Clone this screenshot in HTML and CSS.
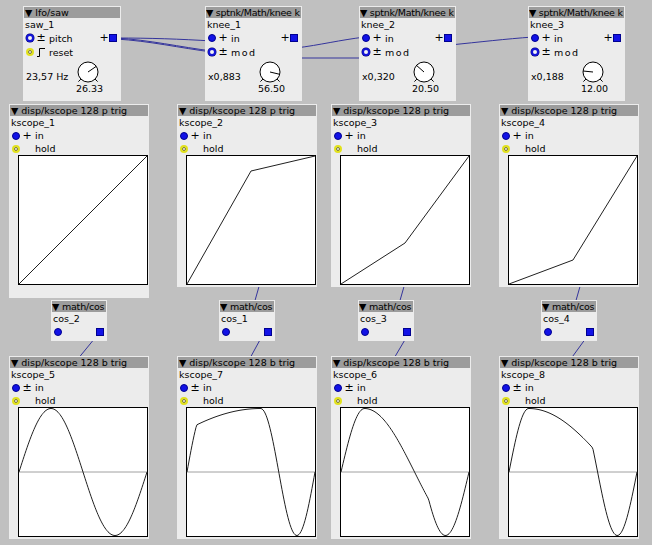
FILE: index.html
```html
<!DOCTYPE html>
<html>
<head>
<meta charset="utf-8">
<link rel="stylesheet" href="styles.css">
</head>
<body>
<div class="patch">
  <svg class="wires" width="652" height="545" viewBox="0 0 652 545">
    <g fill="none" stroke="#34349c" stroke-width="1">
      <path d="M116 38 C150 38 180 39 212 41"/>
      <path d="M116 38 C150 40 180 47 212 51"/>
      <path d="M116 39 C150 41 180 48 212 52"/>
      <path d="M296 48 C320 45 340 40 365 37"/>
      <path d="M296 58 L365 58"/>
      <path d="M450 45 C480 42 505 39 533 37"/>
      <path d="M260 283 L254 304"/>
      <path d="M261 338 L249 360"/>
      <path d="M95 338 L77 360"/>
      <path d="M405 283 L399 304"/>
      <path d="M406 338 L393 360"/>
      <path d="M581 283 L575 304"/>
      <path d="M586 338 L570 360"/>
    </g>
  </svg>

  <!-- lfo/saw -->
  <div class="obj small o-lfo">
    <div class="hdr">▼ lfo/saw</div>
    <div class="name">saw_1</div>
    <div class="row">
      <span class="inlet ring"></span><span class="sign">±</span><span class="lbl">pitch</span>
      <span class="out"><span class="sign">+</span><span class="outlet"></span></span>
    </div>
    <div class="row">
      <span class="inlet bool"></span><span class="sign"><svg class="step" width="8" height="10" viewBox="0 0 8 10"><path d="M0 9.5 H2.5 V1.5 H8" fill="none" stroke="#000" stroke-width="1"/></svg></span><span class="lbl">reset</span>
    </div>
    <div class="param">
      <span class="pval">23,57 Hz</span>
      <span class="knob">
        <svg width="24" height="23" viewBox="0 0 24 23"><circle cx="12" cy="11" r="10" fill="#fff" stroke="#000"/><path d="M12 11 L20.25 5.35 M4.9 18.1 L2.4 20.6 M19.1 18.1 L21.6 20.6" stroke="#000" fill="none"/></svg>
        <span class="kval">26.33</span>
      </span>
    </div>
  </div>

  <!-- knee_1 -->
  <div class="obj small o-k1">
    <div class="hdr knee">▼ sptnk/Math/knee k</div>
    <div class="name">knee_1</div>
    <div class="row">
      <span class="inlet fill"></span><span class="sign">+</span><span class="lbl">in</span>
      <span class="out"><span class="sign">+</span><span class="outlet"></span></span>
    </div>
    <div class="row">
      <span class="inlet ring"></span><span class="sign">±</span><span class="lbl wide">mod</span>
    </div>
    <div class="param">
      <span class="pval">x0,883</span>
      <span class="knob">
        <svg width="24" height="23" viewBox="0 0 24 23"><circle cx="12" cy="11" r="10" fill="#fff" stroke="#000"/><path d="M12 11 L21.7 13.3 M4.9 18.1 L2.4 20.6 M19.1 18.1 L21.6 20.6" stroke="#000" fill="none"/></svg>
        <span class="kval">56.50</span>
      </span>
    </div>
  </div>

  <!-- knee_2 -->
  <div class="obj small o-k2">
    <div class="hdr knee">▼ sptnk/Math/knee k</div>
    <div class="name">knee_2</div>
    <div class="row">
      <span class="inlet fill"></span><span class="sign">+</span><span class="lbl">in</span>
      <span class="out"><span class="sign">+</span><span class="outlet"></span></span>
    </div>
    <div class="row">
      <span class="inlet ring"></span><span class="sign">±</span><span class="lbl wide">mod</span>
    </div>
    <div class="param">
      <span class="pval">x0,320</span>
      <span class="knob">
        <svg width="24" height="23" viewBox="0 0 24 23"><circle cx="12" cy="11" r="10" fill="#fff" stroke="#000"/><path d="M12 11 L4.5 4.4 M4.9 18.1 L2.4 20.6 M19.1 18.1 L21.6 20.6" stroke="#000" fill="none"/></svg>
        <span class="kval">20.50</span>
      </span>
    </div>
  </div>

  <!-- knee_3 -->
  <div class="obj small o-k3">
    <div class="hdr knee">▼ sptnk/Math/knee k</div>
    <div class="name">knee_3</div>
    <div class="row">
      <span class="inlet fill"></span><span class="sign">+</span><span class="lbl">in</span>
      <span class="out"><span class="sign">+</span><span class="outlet"></span></span>
    </div>
    <div class="row">
      <span class="inlet ring"></span><span class="sign">±</span><span class="lbl wide">mod</span>
    </div>
    <div class="param">
      <span class="pval">x0,188</span>
      <span class="knob">
        <svg width="24" height="23" viewBox="0 0 24 23"><circle cx="12" cy="11" r="10" fill="#fff" stroke="#000"/><path d="M12 11 L2.1 10 M4.9 18.1 L2.4 20.6 M19.1 18.1 L21.6 20.6" stroke="#000" fill="none"/></svg>
        <span class="kval">12.00</span>
      </span>
    </div>
  </div>

  <!-- upper scopes -->
  <div class="obj scope o-s1 tall">
    <div class="hdr">▼ disp/kscope 128 p trig</div>
    <div class="name">kscope_1</div>
    <div class="srow"><span class="inlet fill"></span><span class="sign">+</span><span class="lbl">in</span></div>
    <div class="srow"><span class="inlet bool"></span><span class="sign"></span><span class="lbl">hold</span></div>
    <div class="plot">
      <svg width="128" height="128" viewBox="0 0 128 128"><polyline class="trace" points="0,128 128,0"/></svg>
    </div>
  </div>

  <div class="obj scope o-s2">
    <div class="hdr">▼ disp/kscope 128 p trig</div>
    <div class="name">kscope_2</div>
    <div class="srow"><span class="inlet fill"></span><span class="sign">+</span><span class="lbl">in</span></div>
    <div class="srow"><span class="inlet bool"></span><span class="sign"></span><span class="lbl">hold</span></div>
    <div class="plot">
      <svg width="128" height="128" viewBox="0 0 128 128"><polyline class="trace" points="0,128 64,15 128,0"/></svg>
    </div>
  </div>

  <div class="obj scope o-s3">
    <div class="hdr">▼ disp/kscope 128 p trig</div>
    <div class="name">kscope_3</div>
    <div class="srow"><span class="inlet fill"></span><span class="sign">+</span><span class="lbl">in</span></div>
    <div class="srow"><span class="inlet bool"></span><span class="sign"></span><span class="lbl">hold</span></div>
    <div class="plot">
      <svg width="128" height="128" viewBox="0 0 128 128"><polyline class="trace" points="0,128 64,87 128,0"/></svg>
    </div>
  </div>

  <div class="obj scope o-s4">
    <div class="hdr">▼ disp/kscope 128 p trig</div>
    <div class="name">kscope_4</div>
    <div class="srow"><span class="inlet fill"></span><span class="sign">+</span><span class="lbl">in</span></div>
    <div class="srow"><span class="inlet bool"></span><span class="sign"></span><span class="lbl">hold</span></div>
    <div class="plot">
      <svg width="128" height="128" viewBox="0 0 128 128"><polyline class="trace" points="0,128 64,104 128,0"/></svg>
    </div>
  </div>

  <!-- cos -->
  <div class="obj cos o-c2">
    <div class="hdr">▼ math/cos</div>
    <div class="name">cos_2</div>
    <div class="crow"><span class="inlet fill"></span><span class="outlet"></span></div>
  </div>
  <div class="obj cos o-c1">
    <div class="hdr">▼ math/cos</div>
    <div class="name">cos_1</div>
    <div class="crow"><span class="inlet fill"></span><span class="outlet"></span></div>
  </div>
  <div class="obj cos o-c3">
    <div class="hdr">▼ math/cos</div>
    <div class="name">cos_3</div>
    <div class="crow"><span class="inlet fill"></span><span class="outlet"></span></div>
  </div>
  <div class="obj cos o-c4">
    <div class="hdr">▼ math/cos</div>
    <div class="name">cos_4</div>
    <div class="crow"><span class="inlet fill"></span><span class="outlet"></span></div>
  </div>

  <!-- lower scopes -->
  <div class="obj scope o-s5">
    <div class="hdr">▼ disp/kscope 128 b trig</div>
    <div class="name">kscope_5</div>
    <div class="srow"><span class="inlet fill"></span><span class="sign">±</span><span class="lbl">in</span></div>
    <div class="srow"><span class="inlet bool"></span><span class="sign"></span><span class="lbl">hold</span></div>
    <div class="plot">
      <svg width="128" height="128" viewBox="0 0 128 128"><line class="mid" x1="0" y1="64" x2="128" y2="64"/><polyline class="trace wave" data-f="0.5" points=""/></svg>
    </div>
  </div>
  <div class="obj scope o-s7">
    <div class="hdr">▼ disp/kscope 128 b trig</div>
    <div class="name">kscope_7</div>
    <div class="srow"><span class="inlet fill"></span><span class="sign">±</span><span class="lbl">in</span></div>
    <div class="srow"><span class="inlet bool"></span><span class="sign"></span><span class="lbl">hold</span></div>
    <div class="plot">
      <svg width="128" height="128" viewBox="0 0 128 128"><line class="mid" x1="0" y1="64" x2="128" y2="64"/><polyline class="trace wave" data-f="0.883" points=""/></svg>
    </div>
  </div>
  <div class="obj scope o-s6">
    <div class="hdr">▼ disp/kscope 128 b trig</div>
    <div class="name">kscope_6</div>
    <div class="srow"><span class="inlet fill"></span><span class="sign">±</span><span class="lbl">in</span></div>
    <div class="srow"><span class="inlet bool"></span><span class="sign"></span><span class="lbl">hold</span></div>
    <div class="plot">
      <svg width="128" height="128" viewBox="0 0 128 128"><line class="mid" x1="0" y1="64" x2="128" y2="64"/><polyline class="trace wave" data-f="0.320" points=""/></svg>
    </div>
  </div>
  <div class="obj scope o-s8">
    <div class="hdr">▼ disp/kscope 128 b trig</div>
    <div class="name">kscope_8</div>
    <div class="srow"><span class="inlet fill"></span><span class="sign">±</span><span class="lbl">in</span></div>
    <div class="srow"><span class="inlet bool"></span><span class="sign"></span><span class="lbl">hold</span></div>
    <div class="plot">
      <svg width="128" height="128" viewBox="0 0 128 128"><line class="mid" x1="0" y1="64" x2="128" y2="64"/><polyline class="trace wave" data-f="0.188" points=""/></svg>
    </div>
  </div>
</div>
<script src="script.js"></script>
</body>
</html>
```

FILE: styles.css
```css
* { box-sizing: border-box; }
body {
  margin: 0;
  background: #c0c0c0;
  font-family: "DejaVu Sans", sans-serif;
  font-size: 9.5px;
  color: #000;
}
.patch {
  position: relative;
  width: 652px;
  height: 545px;
  overflow: hidden;
  background: #c0c0c0;
}
.wires { position: absolute; left: 0; top: 0; }

.obj {
  position: absolute;
  background: #ececec;
  padding: 1px;
  display: flex;
  flex-direction: column;
}
.hdr {
  height: 11px;
  line-height: 11px;
  background: #9c9c9c;
  padding-left: 1px;
  white-space: nowrap;
  overflow: hidden;
  flex: none;
}
.hdr.knee { letter-spacing: -0.25px; padding-left: 0; }
.name {
  height: 13px;
  line-height: 13px;
  padding-left: 1px;
  white-space: nowrap;
  flex: none;
}
.row {
  display: flex;
  align-items: center;
  height: 14px;
  padding-left: 2px;
  flex: none;
}
.srow {
  display: flex;
  align-items: center;
  height: 13px;
  padding-left: 2px;
  flex: none;
}
.sign {
  width: 14px;
  text-align: center;
  font-size: 11px;
  line-height: 10px;
  display: flex;
  justify-content: center;
}
.lbl { padding-left: 1px; white-space: nowrap; }
.lbl.wide { letter-spacing: 1.5px; }
.out { margin-left: auto; display: flex; align-items: center; padding-right: 3px; }
.out .sign { width: 10px; }

.inlet {
  width: 8px;
  height: 8px;
  border-radius: 50%;
  flex: none;
}
.inlet.fill { background: #1212e6; border: 1px solid #000090; }
.inlet.ring { background: #f4f4f4; border: 2px solid #1414d8; box-shadow: 0 0 0 0.5px #000070; }
.inlet.bool { background: #ececec; border: 2px solid #e2e21c; box-shadow: inset 0 0 0 1px #6a6a20; }
.outlet {
  width: 8px;
  height: 8px;
  background: #1212e6;
  border: 1px solid #000090;
  flex: none;
}
.step { display: block; }

.param {
  display: flex;
  align-items: flex-start;
  padding-top: 2px;
}
.pval {
  width: 52px;
  padding-left: 2px;
  margin-top: 11px;
  line-height: 10px;
  white-space: nowrap;
}
.knob {
  width: 24px;
  display: flex;
  flex-direction: column;
  align-items: center;
}
.knob svg { display: block; }
.kval { line-height: 10px; white-space: nowrap; margin-left: 3px; }

.small { top: 6px; width: 97px; height: 95px; }
.o-lfo { left: 23px; width: 98px; }
.o-k1 { left: 205px; }
.o-k2 { left: 359px; }
.o-k3 { left: 528px; }

.scope { width: 140px; height: 183px; }
.scope.tall { height: 194px; }
.o-s1 { left: 9px; top: 104px; }
.o-s2 { left: 177px; top: 104px; }
.o-s3 { left: 331px; top: 104px; }
.o-s4 { left: 499px; top: 104px; }
.o-s5 { left: 9px; top: 356px; }
.o-s7 { left: 177px; top: 356px; }
.o-s6 { left: 331px; top: 356px; }
.o-s8 { left: 499px; top: 356px; }

.plot {
  width: 130px;
  height: 130px;
  margin-left: 8px;
  border: 1px solid #000;
  background: #fff;
  flex: none;
}
.plot svg { display: block; overflow: visible; }
.trace { fill: none; stroke: #202020; stroke-width: 1; }
.mid { stroke: #a0a0a0; stroke-width: 1; }

.cos { top: 300px; width: 56px; height: 41px; }
.o-c2 { left: 51px; }
.o-c1 { left: 219px; }
.o-c3 { left: 358px; }
.o-c4 { left: 541px; }
.cos .hdr { padding-left: 0; letter-spacing: -0.2px; }
.cos .name { height: 14px; line-height: 14px; }
.crow {
  display: flex;
  align-items: center;
  justify-content: space-between;
  height: 12px;
  padding: 0 2px 0 2px;
}
```

FILE: script.js
```js
document.querySelectorAll('.wave').forEach(function (pl) {
  var f = parseFloat(pl.getAttribute('data-f'));
  function knee(t) {
    return t < 0.5 ? 2 * f * t : f + (1 - f) * 2 * (t - 0.5);
  }
  var t0 = f >= 0.375 ? 0.75 / (2 * f) : 0.5 + (0.75 - f) / (2 * (1 - f));
  var pts = [];
  for (var i = 0; i <= 128; i++) {
    var t = (t0 + i / 128) % 1;
    var u = knee(t);
    var y = Math.cos(2 * Math.PI * u);
    pts.push(i + ',' + (64 - 63.5 * y).toFixed(2));
  }
  pl.setAttribute('points', pts.join(' '));
});
```
